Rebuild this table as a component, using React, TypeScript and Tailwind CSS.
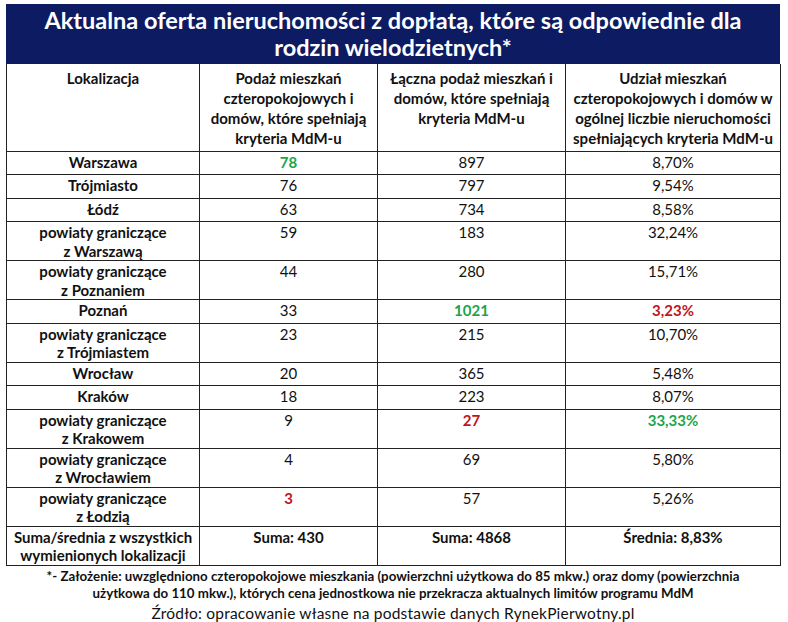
import React from "react";

type Row = {
  name: string[];
  a: string;
  b: string;
  c: string;
  aColor?: string;
  bColor?: string;
  cColor?: string;
  tall?: boolean;
};

const GREEN = "text-[#1aa64a] font-bold";
const RED = "text-[#c0141c] font-bold";

const ROWS: Row[] = [
  { name: ["Warszawa"], a: "78", b: "897", c: "8,70%", aColor: GREEN },
  { name: ["Trójmiasto"], a: "76", b: "797", c: "9,54%" },
  { name: ["Łódź"], a: "63", b: "734", c: "8,58%" },
  { name: ["powiaty graniczące", "z Warszawą"], a: "59", b: "183", c: "32,24%", tall: true },
  { name: ["powiaty graniczące", "z Poznaniem"], a: "44", b: "280", c: "15,71%", tall: true },
  { name: ["Poznań"], a: "33", b: "1021", c: "3,23%", bColor: GREEN, cColor: RED },
  { name: ["powiaty graniczące", "z Trójmiastem"], a: "23", b: "215", c: "10,70%", tall: true },
  { name: ["Wrocław"], a: "20", b: "365", c: "5,48%" },
  { name: ["Kraków"], a: "18", b: "223", c: "8,07%" },
  { name: ["powiaty graniczące", "z Krakowem"], a: "9", b: "27", c: "33,33%", bColor: RED, cColor: GREEN, tall: true },
  { name: ["powiaty graniczące", "z Wrocławiem"], a: "4", b: "69", c: "5,80%", tall: true },
  { name: ["powiaty graniczące", "z Łodzią"], a: "3", b: "57", c: "5,26%", aColor: RED, tall: true },
];

const cell = "border border-[#222] align-top text-center p-0";

export default function App() {
  return (
    <div className="w-[788px] h-[622px] bg-white pl-[6px] pt-[4px] font-['Lato','Liberation_Sans',sans-serif] text-[#111]">
      <div className="w-[774px]">
        <div className="h-[60px] bg-[#0c1b62] flex flex-col items-center justify-center text-white font-bold text-[23.5px] leading-[27px]">
          <div>Aktualna oferta nieruchomości z dopłatą, które są odpowiednie dla</div>
          <div>rodzin wielodzietnych*</div>
        </div>
        <table className="w-[774px] table-fixed border-collapse text-[15px] leading-[18.5px]">
          <colgroup>
            <col className="w-[193px]" />
            <col className="w-[178px]" />
            <col className="w-[188px]" />
            <col className="w-[215px]" />
          </colgroup>
          <thead>
            <tr className="h-[87px] font-bold">
              <td className={`${cell} border-t-0 pt-[4px] leading-[20px]`}>Lokalizacja</td>
              <td className={`${cell} border-t-0 pt-[4px] leading-[20px]`}>
                Podaż mieszkań
                <br />
                czteropokojowych i
                <br />
                domów, które spełniają
                <br />
                kryteria MdM-u
              </td>
              <td className={`${cell} border-t-0 pt-[4px] leading-[20px]`}>
                Łączna podaż mieszkań i
                <br />
                domów, które spełniają
                <br />
                kryteria MdM-u
              </td>
              <td className={`${cell} border-t-0 pt-[4px] leading-[20px]`}>
                Udział mieszkań
                <br />
                czteropokojowych i domów w
                <br />
                ogólnej liczbie nieruchomości
                <br />
                spełniających kryteria MdM-u
              </td>
            </tr>
          </thead>
          <tbody>
            {ROWS.map((r) => (
              <tr key={r.name.join(" ")} className={r.tall ? "h-[39px]" : "h-[23.5px]"}>
                <td className={`${cell} font-bold pt-[1px]`}>
                  {r.name.map((n, i) => (
                    <div key={i}>{n}</div>
                  ))}
                </td>
                <td className={`${cell} pt-[1px] ${r.aColor ?? ""}`}>{r.a}</td>
                <td className={`${cell} pt-[1px] ${r.bColor ?? ""}`}>{r.b}</td>
                <td className={`${cell} pt-[1px] ${r.cColor ?? ""}`}>{r.c}</td>
              </tr>
            ))}
            <tr className="h-[39px] font-bold">
              <td className={`${cell} pt-[1px]`}>
                <div>Suma/średnia z wszystkich</div>
                <div>wymienionych lokalizacji</div>
              </td>
              <td className={`${cell} pt-[1px]`}>Suma: 430</td>
              <td className={`${cell} pt-[1px]`}>Suma: 4868</td>
              <td className={`${cell} pt-[1px]`}>Średnia: 8,83%</td>
            </tr>
          </tbody>
        </table>
        <div className="mt-[2px] text-center font-bold text-[13.3px] leading-[17px]">
          <div>*- Założenie: uwzględniono czteropokojowe mieszkania (powierzchni użytkowa do 85 mkw.) oraz domy (powierzchnia</div>
          <div>użytkowa do 110 mkw.), których cena jednostkowa nie przekracza aktualnych limitów programu MdM</div>
        </div>
        <div className="mt-[1px] text-center text-[15.5px] leading-[20px] tracking-[0.2px]">
          Źródło: opracowanie własne na podstawie danych RynekPierwotny.pl
        </div>
      </div>
    </div>
  );
}
